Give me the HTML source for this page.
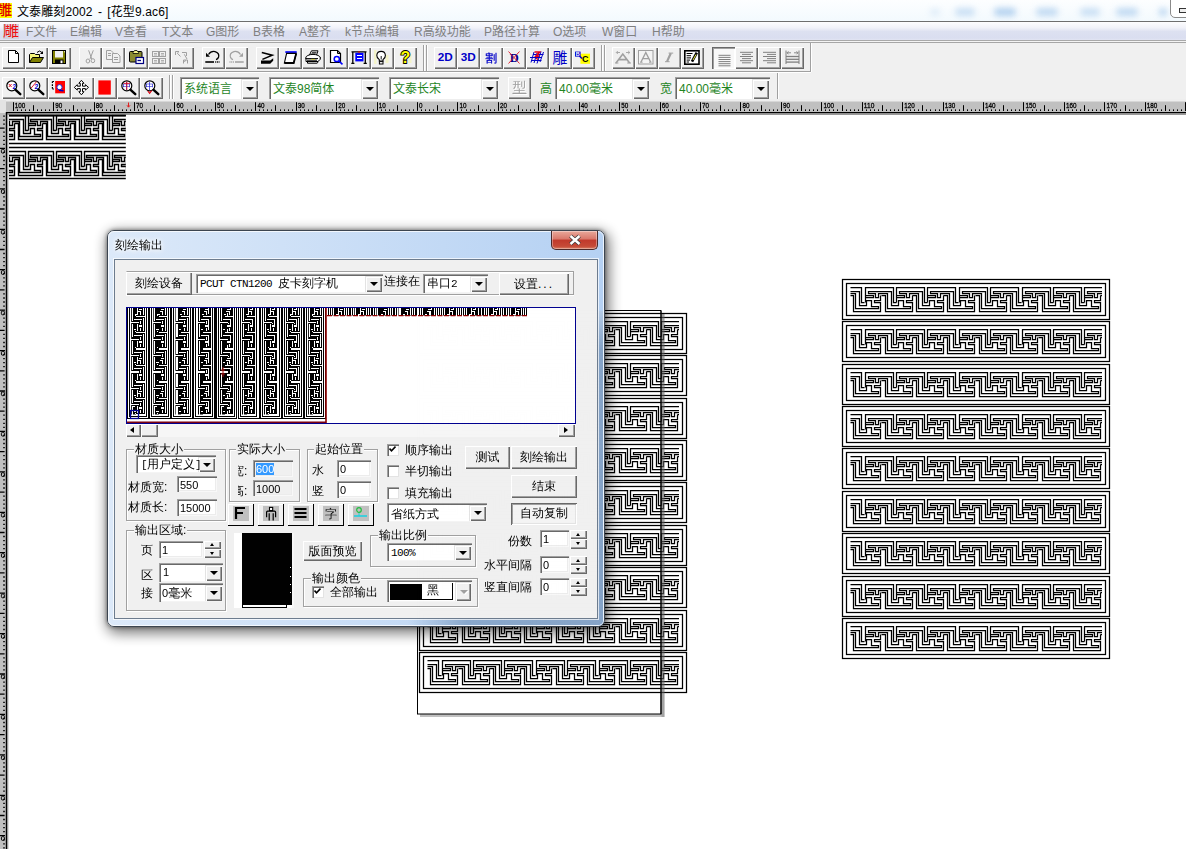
<!DOCTYPE html>
<html lang="zh"><head><meta charset="utf-8"><title>文泰雕刻2002 - [花型9.ac6]</title>
<style>
*{box-sizing:border-box}
html,body{margin:0;padding:0}
body{width:1186px;height:849px;overflow:hidden;position:relative;background:#fff;font-family:"Liberation Sans","WenQuanYi Zen Hei","Noto Sans CJK SC",sans-serif;font-size:12px;color:#000}
.a{position:absolute}
.ya{font-family:"Liberation Sans","Noto Sans CJK SC",sans-serif}
.tb{position:absolute;width:23px;height:22px;background:#f0f0f0;box-shadow:inset 1px 1px 0 #fff,inset -1px -1px 0 #696969,inset -2px -2px 0 #a0a0a0}
.tb.pr{background:#f8f8f8;box-shadow:inset 1px 1px 0 #696969,inset 2px 2px 0 #a0a0a0,inset -1px -1px 0 #fff}
.tb svg{position:absolute;left:3px;top:3px;width:16px;height:16px;overflow:visible}
.bt{position:absolute;background:#f0f0f0;box-shadow:inset 1px 1px 0 #fff,inset -1px -1px 0 #696969,inset -2px -2px 0 #a0a0a0;text-align:center;white-space:nowrap}
.ed{position:absolute;background:#fff;box-shadow:inset 1px 1px 0 #a0a0a0,inset 2px 2px 0 #696969,inset -1px -1px 0 #f8f8f8,inset -2px -2px 0 #ececec;white-space:nowrap;overflow:hidden}
.cbx{position:absolute;background:#fff;box-shadow:inset 1px 1px 0 #a0a0a0,inset 2px 2px 0 #696969,inset -1px -1px 0 #f4f4f4;white-space:nowrap;overflow:hidden}
.dd{position:absolute;right:1px;top:2px;bottom:1px;width:17px;background:#f0f0f0;box-shadow:inset 1px 1px 0 #e3e3e3,inset 2px 2px 0 #fff,inset -1px -1px 0 #696969,inset -2px -2px 0 #a0a0a0}
.dd:after{content:"";position:absolute;left:5px;top:50%;margin-top:-2px;border:4px solid transparent;border-top:4px solid #000;border-bottom:0}
.dd.dis:after{border-top-color:#a0a0a0;filter:drop-shadow(1px 1px 0 #fff)}
.gb{position:absolute;border:1px solid #a0a0a0;box-shadow:inset 1px 1px 0 #fff,1px 1px 0 #fff}
.gl{position:absolute;background:#f0f0f0;white-space:nowrap;line-height:12px;padding:0 1px}
.lb{position:absolute;white-space:nowrap;line-height:12px}
.cb{position:absolute;width:12px;height:12px;background:#fff;box-shadow:inset 1px 1px 0 #a0a0a0,inset 2px 2px 0 #696969,inset -1px -1px 0 #e3e3e3}
.sp{position:absolute;background:#f0f0f0;box-shadow:inset 1px 1px 0 #fff,inset -1px -1px 0 #696969,inset -2px -2px 0 #a0a0a0}
.sp:after{content:"";position:absolute;left:50%;margin-left:-3px;top:50%;margin-top:-2px;border:2.5px solid transparent}
.sp.u:after{border-bottom:3px solid #000;border-top:0}
.sp.d:after{border-top:3px solid #000;border-bottom:0}
.gn{color:#1f851f}
.mn{font-family:"Liberation Mono",monospace;font-size:11px;letter-spacing:-0.6px}
.num{font-family:"Liberation Sans",sans-serif;font-size:11px}
</style></head><body>

<div class="a" style="left:0;top:0;width:1186px;height:21px;background:linear-gradient(#fdfeff,#f3fafe)"></div>
<div class="a" style="left:930px;top:8px;width:10px;height:8px;background:#9cc3ea;opacity:0.25;filter:blur(3px);border-radius:4px"></div>
<div class="a" style="left:955px;top:8px;width:20px;height:8px;background:#9cc3ea;opacity:0.5;filter:blur(3px);border-radius:4px"></div>
<div class="a" style="left:994px;top:8px;width:22px;height:8px;background:#9cc3ea;opacity:0.75;filter:blur(3px);border-radius:4px"></div>
<div class="a" style="left:1036px;top:8px;width:22px;height:8px;background:#9cc3ea;opacity:0.6;filter:blur(3px);border-radius:4px"></div>
<div class="a" style="left:1080px;top:8px;width:20px;height:8px;background:#9cc3ea;opacity:0.5;filter:blur(3px);border-radius:4px"></div>
<div class="a" style="left:1116px;top:8px;width:22px;height:8px;background:#9cc3ea;opacity:0.6;filter:blur(3px);border-radius:4px"></div>
<div class="a" style="left:1159px;top:8px;width:8px;height:8px;background:#9cc3ea;opacity:0.7;filter:blur(3px);border-radius:4px"></div>
<div class="a" style="left:1170px;top:-6px;width:30px;height:24px;background:#fff;border:1px solid #8a8a8a;border-radius:5px"></div>
<div class="a" style="left:1179px;top:8px;width:12px;height:5px;border:1px solid #333;background:#eee"></div>
<div class="a" style="left:0;top:3px;width:12px;height:15px;background:#ffff00;overflow:hidden"><span class="a ya" style="left:-4px;top:-3px;font-size:16px;line-height:20px;color:#e00000;font-weight:500">雕</span></div>
<div class="a ya" style="left:17px;top:2px;font-size:12px;line-height:20px;white-space:nowrap;color:#000;word-spacing:1.8px;letter-spacing:.12px">文泰雕刻2002 - [花型9.ac6]</div>
<div class="a" style="left:0;top:21px;width:1186px;height:1px;background:#6e6e6e"></div>
<div class="a" style="left:0;top:22px;width:1186px;height:19px;background:linear-gradient(#fdfdfe 0%,#f1f2f9 30%,#dde1f1 50%,#dadef0 85%,#e6e9f5 100%)"></div>
<div class="a" style="left:0;top:40px;width:1186px;height:1px;background:#a9a9a9"></div>
<div class="a" style="left:0;top:41px;width:1186px;height:1px;background:#f4f4f4"></div>
<div class="a" style="left:0;top:42px;width:1186px;height:58px;background:#f0f0f0"></div>
<div class="a" style="left:0;top:42px;width:1186px;height:1px;background:#a6a6a6"></div>
<div class="a" style="left:3px;top:24px;width:16px;height:15px;background:#d2d2dc;overflow:hidden"><span class="a ya" style="left:0px;top:-3px;font-size:16px;line-height:20px;color:#f01010">雕</span></div>
<div class="a ya" style="left:26px;top:24px;line-height:17px;font-size:12px;color:#808080;white-space:nowrap">F文件</div>
<div class="a ya" style="left:70px;top:24px;line-height:17px;font-size:12px;color:#808080;white-space:nowrap">E编辑</div>
<div class="a ya" style="left:115px;top:24px;line-height:17px;font-size:12px;color:#808080;white-space:nowrap">V查看</div>
<div class="a ya" style="left:162px;top:24px;line-height:17px;font-size:12px;color:#808080;white-space:nowrap">T文本</div>
<div class="a ya" style="left:206px;top:24px;line-height:17px;font-size:12px;color:#808080;white-space:nowrap">G图形</div>
<div class="a ya" style="left:253px;top:24px;line-height:17px;font-size:12px;color:#808080;white-space:nowrap">B表格</div>
<div class="a ya" style="left:299px;top:24px;line-height:17px;font-size:12px;color:#808080;white-space:nowrap">A整齐</div>
<div class="a ya" style="left:345px;top:24px;line-height:17px;font-size:12px;color:#808080;white-space:nowrap">k节点编辑</div>
<div class="a ya" style="left:414px;top:24px;line-height:17px;font-size:12px;color:#808080;white-space:nowrap">R高级功能</div>
<div class="a ya" style="left:484px;top:24px;line-height:17px;font-size:12px;color:#808080;white-space:nowrap">P路径计算</div>
<div class="a ya" style="left:553px;top:24px;line-height:17px;font-size:12px;color:#808080;white-space:nowrap">O选项</div>
<div class="a ya" style="left:602px;top:24px;line-height:17px;font-size:12px;color:#808080;white-space:nowrap">W窗口</div>
<div class="a ya" style="left:652px;top:24px;line-height:17px;font-size:12px;color:#808080;white-space:nowrap">H帮助</div>
<div class="tb" style="left:2px;top:47px"><svg viewBox="0 0 16 16" style=""><path d="M3.5 0.5 H10.5 L13.5 3.5 V12.5 H3.5 Z" fill="#fff" stroke="#000"/><path d="M10.5 0.5 V3.5 H13.5" fill="none" stroke="#000"/></svg></div>
<div class="tb" style="left:25px;top:47px"><svg viewBox="0 0 16 16" style=""><path d="M1.5 12.5 V4.5 L2.5 3.5 H6.5 L7.5 4.5 H11.5 V7.5" fill="#f4f47a" stroke="#000"/><path d="M1.5 12.5 L4.5 7.5 H15.5 L12.5 12.5 Z" fill="#808000" stroke="#000"/><path d="M9 2.5 Q11.5 -0.5 14 2.5" fill="none" stroke="#000"/><path d="M15 1 V4 H12 Z" fill="#000"/></svg></div>
<div class="tb" style="left:48px;top:47px"><svg viewBox="0 0 16 16" style=""><rect x="1.5" y="0.5" width="13" height="13" fill="#808000" stroke="#000"/><rect x="4" y="1" width="8" height="6.5" fill="#f0f0f0"/><rect x="4" y="9.5" width="8.5" height="4" fill="#000"/><rect x="9.5" y="10.5" width="2" height="2.7" fill="#fff"/><rect x="13" y="1.3" width="1" height="1" fill="#fff"/></svg></div>
<div class="tb" style="left:79px;top:47px"><svg viewBox="0 0 16 16" style=""><path d="M6.6 0.3 L9.8 9 M11.3 0.3 L8 9" stroke="#a0a0a0" fill="none"/><ellipse cx="5.9" cy="11" rx="1.8" ry="2" fill="none" stroke="#a0a0a0"/><ellipse cx="10.9" cy="10.7" rx="1.8" ry="2" fill="none" stroke="#a0a0a0"/></svg></div>
<div class="tb" style="left:102px;top:47px"><svg viewBox="0 0 16 16" style=""><path d="M1.5 0.5 H6 L8 2.5 V9.5 H1.5 Z" fill="#f0f0f0" stroke="#a0a0a0"/><path d="M7.5 3.5 H12.5 L15 6 V12.5 H7.5 Z" fill="#f0f0f0" stroke="#a0a0a0"/><path d="M3 3.5 H6 M3 5.5 H6 M9 7.5 H13 M9 9.5 H13" stroke="#a0a0a0"/></svg></div>
<div class="tb" style="left:125px;top:47px"><svg viewBox="0 0 16 16" style=""><rect x="1.5" y="1.5" width="12.5" height="10.5" rx="1" fill="#8a8a30" stroke="#000"/><path d="M5 2.5 L6.5 0.5 H9 L10.5 2.5 V3.5 H5 Z" fill="#f4f48a" stroke="#000" stroke-width=".8"/><rect x="8" y="7.5" width="7.5" height="6" fill="#fff" stroke="#000080" stroke-width="1.2"/><path d="M9.5 10.5 H13" stroke="#000080" stroke-width="1.3"/></svg></div>
<div class="tb" style="left:148px;top:47px"><svg viewBox="0 0 16 16" style=""><g fill="none" stroke="#a0a0a0"><rect x="1.5" y="1.5" width="6" height="5"/><rect x="8.5" y="1.5" width="6" height="5"/><rect x="1.5" y="8.5" width="6" height="5"/><rect x="8.5" y="8.5" width="6" height="5"/><path d="M3 3.5 H6 M10 3.5 H13 M3 10.5 H6 M10 10.5 H13 M3 5 H6 M10 5 H13 M3 12 H6 M10 12 H13" stroke-width=".8"/></g></svg></div>
<div class="tb" style="left:171px;top:47px"><svg viewBox="0 0 16 16" style=""><g fill="none" stroke="#a0a0a0"><path d="M1.5 5 V1.5 H5 L3.3 3.2 L6.5 6.5 M8 2.5 H12.5 V6 M10.3 4.3 L13 9 M9.5 13.5 V10 H13.5 V13.5 M11.5 10 L10.5 12"/></g></svg></div>
<div class="tb" style="left:202px;top:47px"><svg viewBox="0 0 16 16" style=""><path d="M3.5 4.5 Q6 0.8 10 1.6 Q14.6 3 13.6 7 Q13 9 11 9.6" fill="none" stroke="#000" stroke-width="1.3"/><path d="M1 2.8 V6.8 H5 Z" fill="#000"/><path d="M0.3 12 H9" stroke="#000" stroke-width="1.6"/><path d="M10.2 12 H14.5" stroke="#000" stroke-width="1.6" stroke-dasharray="1 .7"/></svg></div>
<div class="tb" style="left:225px;top:47px"><svg viewBox="0 0 16 16" style=""><path d="M12.5 4.5 Q10 0.8 6 1.6 Q1.4 3 2.4 7 Q3 9 5 9.6" fill="none" stroke="#a0a0a0" stroke-width="1.2"/><path d="M15 2.8 V6.8 H11 Z" fill="#a0a0a0"/><path d="M7 12 H15.7" stroke="#a0a0a0" stroke-width="1.5"/><path d="M1.5 12 H6" stroke="#a0a0a0" stroke-width="1.5" stroke-dasharray="1 .7"/></svg></div>
<div class="tb" style="left:256px;top:47px"><svg viewBox="0 0 16 16" style=""><path d="M2.8 2.6 L13.3 5.2 L3.4 9.4" fill="none" stroke="#000" stroke-width="1.5"/><path d="M2 10.4 H11.2 L14.2 8.2 V10.8 L11.2 13.8 H2 Z" fill="#000"/></svg></div>
<div class="tb" style="left:279px;top:47px"><svg viewBox="0 0 16 16" style=""><rect x="3.3" y="1.2" width="11.4" height="1.7" fill="#0000ff"/><path d="M4.6 3.4 H14.2 L11.7 13 H2.4 Z" fill="#fff" stroke="#000" stroke-width="1.1"/><path d="M14.2 3.4 L11.7 13 H2.4" fill="none" stroke="#000" stroke-width="1.8"/></svg></div>
<div class="tb" style="left:302px;top:47px"><svg viewBox="0 0 16 16" style=""><path d="M4.5 5 L6.5 0.8 H13 L11.5 5" fill="#fff" stroke="#000"/><path d="M7 2.4 H11.5 M6.3 3.8 H10.8" stroke="#000" stroke-width=".8"/><ellipse cx="8" cy="8" rx="7.3" ry="3.6" fill="#fff" stroke="#000"/><path d="M1 8 V11.5 H13 L15.2 9.3 V7" fill="#fff" stroke="#000"/><path d="M1 8.6 H13 M2 10.2 H12" stroke="#000"/><path d="M6 9.4 H10" stroke="#c8c84a" stroke-width="1"/><path d="M2.5 11.5 V13.2 H12 L13.5 11.8" fill="none" stroke="#000"/></svg></div>
<div class="tb" style="left:325px;top:47px"><svg viewBox="0 0 16 16" style=""><path d="M2.5 0.5 H9.5 L12.5 3.5 V12.5 H2.5 Z" fill="#fff" stroke="#000" stroke-width="1.2"/><path d="M9.5 0.5 V3.5 H12.5" fill="none" stroke="#000"/><circle cx="8.8" cy="9" r="2.6" fill="#fff" stroke="#0000ff" stroke-width="1.5"/><path d="M10.8 11 L14.5 14.3" stroke="#0000ff" stroke-width="1.6"/></svg></div>
<div class="tb" style="left:348px;top:47px"><svg viewBox="0 0 16 16" style=""><path d="M0.5 1.8 H15.5 M1.8 1.5 V13.3 M14.3 1.5 V13.3 M0.3 13.3 H3.4 M12.6 13.3 H15.8" stroke="#000" stroke-width="1.3" fill="none"/><rect x="4.3" y="2.8" width="8.2" height="8.6" fill="#0000ff"/><path d="M6 5.5 H11 M6 8.5 H11" stroke="#fff" stroke-width="1"/><path d="M8 1 V3" stroke="#e00" stroke-width="1"/></svg></div>
<div class="tb" style="left:371px;top:47px"><svg viewBox="0 0 16 16" style=""><rect x="0" y="0" width="2.5" height="14" fill="#f3f3c8"/><rect x="11.5" y="5" width="3" height="8" fill="#f3f3c8"/><path d="M5.3 11 V9.6 Q2.6 7.6 2.8 5.2 Q3.2 1.4 7.2 1.4 Q11 1.4 11.4 5.2 Q11.6 7.6 9 9.6 V11 Z" fill="#fff" stroke="#000" stroke-width="1.1"/><rect x="5.4" y="11.6" width="3.6" height="2.4" fill="#fff" stroke="#000"/><path d="M7.2 6 V9.5" stroke="#000" stroke-width=".9"/></svg></div>
<div class="tb" style="left:394px;top:47px"><svg viewBox="0 0 16 16" style=""><rect x="11" y="4" width="3.5" height="9" fill="#f3f3c8"/><text x="8.3" y="13" font-family="Liberation Sans,sans-serif" font-weight="bold" font-size="16" text-anchor="middle" fill="#ffff00" stroke="#000" stroke-width="1.8" paint-order="stroke">?</text></svg></div>
<div class="tb" style="left:434px;top:47px"><svg viewBox="0 0 16 16" style=""><text x="8.3" y="11.4" font-family="Liberation Sans,sans-serif" font-weight="bold" font-size="11.8" text-anchor="middle" fill="#0000c8" textLength="15" lengthAdjust="spacingAndGlyphs">2D</text></svg></div>
<div class="tb" style="left:457px;top:47px"><svg viewBox="0 0 16 16" style=""><text x="8.3" y="11.4" font-family="Liberation Sans,sans-serif" font-weight="bold" font-size="11.8" text-anchor="middle" fill="#0000c8" textLength="15" lengthAdjust="spacingAndGlyphs">3D</text></svg></div>
<div class="tb" style="left:480px;top:47px"><svg viewBox="0 0 16 16" style=""><text x="8.3" y="11.6" font-family="WenQuanYi Zen Hei,Noto Sans CJK SC,sans-serif" font-size="11.5" text-anchor="middle" fill="#0000c8" stroke="#0000c8" stroke-width=".35">割</text></svg></div>
<div class="tb" style="left:503px;top:47px"><svg viewBox="0 0 16 16" style=""><text x="8.3" y="11.6" font-family="Liberation Serif,serif" font-weight="bold" font-size="12.5" text-anchor="middle" fill="#000090">D</text><path d="M2.5 1.5 L13.5 13.5 M13.5 1.5 L2.5 13.5" stroke="#e01020" stroke-width=".9"/></svg></div>
<div class="tb" style="left:526px;top:47px"><svg viewBox="0 0 16 16" style=""><g stroke="#0000c8" stroke-width="1" fill="none"><path d="M5 2 L2 12.5 M8 3 L5 13 M12 1.5 L8 13.5 M14.5 2 L11 12 M1 7.5 H13 M2 10.5 H12.5 M4 4.5 H14.5"/></g><path d="M5.5 2 H10.5 L7 6.2 H10" stroke="#e0001a" stroke-width="1.7" fill="none"/><path d="M7 8 L9 9.5" stroke="#e0001a" stroke-width="1.5"/></svg></div>
<div class="tb" style="left:549px;top:47px"><svg viewBox="0 0 16 16" style=""><text x="7.8" y="13.2" font-family="Noto Sans CJK SC,WenQuanYi Zen Hei,sans-serif" font-size="14.8" text-anchor="middle" fill="#0000c8">雕</text></svg></div>
<div class="tb" style="left:572px;top:47px"><svg viewBox="0 0 16 16" style=""><rect x="5.4" y="3.7" width="9.6" height="10.1" fill="#ffff00"/><rect x="0" y="1.6" width="5.6" height="5" fill="#0000d0"/><text x="2.8" y="6" font-family="Liberation Sans,sans-serif" font-weight="bold" font-size="5.5" text-anchor="middle" fill="#fff">B</text><path d="M4.5 6 L7 8.5" stroke="#0000d0" stroke-width="1.6"/><text x="10.2" y="12.4" font-family="Liberation Sans,sans-serif" font-weight="bold" font-size="9" text-anchor="middle" fill="#000">C</text></svg></div>
<div class="tb" style="left:612px;top:47px"><svg viewBox="0 0 16 16" style=""><path d="M1 13 L7.8 4 L14.6 13 M4 9.6 H11.6" stroke="#a0a0a0" stroke-width="1.6" fill="none"/><path d="M0 13 H3.4 M12.2 13 H16" stroke="#a0a0a0" stroke-width="1.2"/><path d="M1.5 2.5 H5 M2.8 1 L1.3 2.5 L2.8 4 M11 2.5 H14.6 M13.2 1 L14.8 2.5 L13.2 4" stroke="#a0a0a0" stroke-width=".9" fill="none"/></svg></div>
<div class="tb" style="left:635px;top:47px"><svg viewBox="0 0 16 16" style=""><rect x="0.5" y="0.5" width="14.5" height="13.5" fill="#f4f4f4" stroke="#a0a0a0"/><path d="M3 12 L7.8 2.5 L12.6 12 M5 8.6 H10.6" stroke="#a0a0a0" stroke-width="1.4" fill="none"/><path d="M2 12.2 H4.6 M11 12.2 H13.6" stroke="#a0a0a0"/></svg></div>
<div class="tb" style="left:658px;top:47px"><svg viewBox="0 0 16 16" style=""><path d="M6 11.6 L9.8 3.2" stroke="#a0a0a0" stroke-width="2.2"/><path d="M4 11.7 H8.6 M7.6 3.1 H12.2" stroke="#a0a0a0" stroke-width="1"/></svg></div>
<div class="tb" style="left:681px;top:47px"><svg viewBox="0 0 16 16" style=""><rect x="0.8" y="0.8" width="14.2" height="13.4" fill="#fff" stroke="#000" stroke-width="1.6"/><path d="M2.6 3.5 H8.5 M2.6 5.7 H7 M2.6 7.9 H7 M2.6 10.1 H6 M2.6 12 H5" stroke="#000" stroke-width="1"/><path d="M12.8 2.6 L8 11.6" stroke="#000" stroke-width="2.6"/><path d="M12 4.5 L9 10" stroke="#e8e84a" stroke-width="1"/></svg></div>
<div class="tb pr" style="left:712px;top:47px"><svg viewBox="0 0 16 16" style="left:4px;top:4px"><path d="M2.5 4.3 H14.5" stroke="#808080" stroke-width="1"/><path d="M2.5 6.4 H14.5" stroke="#808080" stroke-width="1"/><path d="M2.5 8.5 H14.5" stroke="#808080" stroke-width="1"/><path d="M2.5 10.6 H14.5" stroke="#808080" stroke-width="1"/><path d="M2.5 12.7 H14.5" stroke="#808080" stroke-width="1"/><path d="M2.5 14.8 H14.5" stroke="#808080" stroke-width="1"/></svg></div>
<div class="tb" style="left:735px;top:47px"><svg viewBox="0 0 16 16" style=""><path d="M2 2.3 H15" stroke="#808080" stroke-width="1"/><path d="M4 4.4 H13" stroke="#808080" stroke-width="1"/><path d="M2 6.5 H15" stroke="#808080" stroke-width="1"/><path d="M4 8.6 H13" stroke="#808080" stroke-width="1"/><path d="M2 10.7 H15" stroke="#808080" stroke-width="1"/><path d="M4 12.8 H13" stroke="#808080" stroke-width="1"/></svg></div>
<div class="tb" style="left:758px;top:47px"><svg viewBox="0 0 16 16" style=""><path d="M2 2.3 H15" stroke="#808080" stroke-width="1"/><path d="M6 4.4 H15" stroke="#808080" stroke-width="1"/><path d="M2 6.5 H15" stroke="#808080" stroke-width="1"/><path d="M6 8.6 H15" stroke="#808080" stroke-width="1"/><path d="M2 10.7 H15" stroke="#808080" stroke-width="1"/><path d="M6 12.8 H15" stroke="#808080" stroke-width="1"/></svg></div>
<div class="tb" style="left:781px;top:47px"><svg viewBox="0 0 16 16" style=""><path d="M2 0.5 V14 M15 0.5 V14" stroke="#808080"/><path d="M3 2.8 H7 M4.5 1.3 L3 2.8 L4.5 4.3 M10 2.8 H14 M12.5 1.3 L14 2.8 L12.5 4.3" stroke="#808080" stroke-width=".9" fill="none"/><path d="M2 6.5 H15" stroke="#808080" stroke-width="1.3"/><path d="M2 9.3 H15" stroke="#808080" stroke-width="1.3"/><path d="M2 12.1 H15" stroke="#808080" stroke-width="1.3"/></svg></div>
<div class="tb" style="left:2px;top:77px"><svg viewBox="0 0 16 16" style=""><circle cx="6.8" cy="5.8" r="5" fill="#fff" stroke="#000" stroke-width="1.2"/><path d="M3.8 4 L6.6 7 M6.6 4 L3.8 7" stroke="#e00010" stroke-width=".9"/><text x="9.2" y="8.6" font-family="Liberation Sans,sans-serif" font-weight="bold" font-size="6.5" text-anchor="middle" fill="#0000d0">2</text><path d="M10.6 9.8 L15.3 14.2" stroke="#000" stroke-width="2.4" stroke-linecap="round"/></svg></div>
<div class="tb" style="left:25px;top:77px"><svg viewBox="0 0 16 16" style=""><circle cx="6.8" cy="5.8" r="5" fill="#fff" stroke="#000" stroke-width="1.2"/><path d="M3.2 8 L8.6 1.6" stroke="#e00010" stroke-width=".9"/><text x="8.4" y="9" font-family="Liberation Sans,sans-serif" font-weight="bold" font-size="7" text-anchor="middle" fill="#0000d0">2</text><path d="M10.6 9.8 L15.3 14.2" stroke="#000" stroke-width="2.4" stroke-linecap="round"/></svg></div>
<div class="tb" style="left:48px;top:77px"><svg viewBox="0 0 16 16" style=""><rect x="4.2" y="1" width="9.8" height="12.3" fill="#ff0000"/><path d="M1.4 1.5 V9.5" stroke="#000" stroke-width="1.2" stroke-dasharray="1.6 1.2"/><path d="M1.4 1.5 H3 M1.4 9 H3" stroke="#000"/><circle cx="8.5" cy="7.2" r="2.6" fill="#fff" stroke="#2020d0" stroke-width="1"/><path d="M8 10.2 L12.5 10.8" stroke="#0000c0" stroke-width="1.6"/></svg></div>
<div class="tb" style="left:71px;top:77px"><svg viewBox="0 0 16 16" style=""><path d="M7.4 0.3 L10 3.3 H8.5 V6.2 H11.4 V4.7 L14.5 7.4 L11.4 10.1 V8.6 H8.5 V11.7 H10 L7.4 14.8 L4.8 11.7 H6.3 V8.6 H3.3 V10.1 L0.3 7.4 L3.3 4.7 V6.2 H6.3 V3.3 H4.8 Z" fill="#fff" stroke="#000" stroke-width="1"/></svg></div>
<div class="tb" style="left:94px;top:77px"><svg viewBox="0 0 16 16" style=""><rect x="1.4" y="0.4" width="12.4" height="14.2" fill="#ff0000"/></svg></div>
<div class="tb" style="left:117px;top:77px"><svg viewBox="0 0 16 16" style=""><circle cx="6.8" cy="5.8" r="5" fill="#fff" stroke="#000" stroke-width="1.2"/><text x="6.8" y="9" font-family="WenQuanYi Zen Hei,Noto Sans CJK SC,sans-serif" font-size="8.5" text-anchor="middle" fill="#0000d0">中</text><path d="M6.8 1.5 V10" stroke="#e00010" stroke-width=".9"/><path d="M3.5 3.4 H10" stroke="#e00010" stroke-width=".8"/><path d="M10.6 9.8 L15.3 14.2" stroke="#000" stroke-width="2.4" stroke-linecap="round"/></svg></div>
<div class="tb" style="left:140px;top:77px"><svg viewBox="0 0 16 16" style=""><circle cx="6.8" cy="5.8" r="5" fill="#fff" stroke="#000" stroke-width="1.2"/><text x="6.8" y="9" font-family="WenQuanYi Zen Hei,Noto Sans CJK SC,sans-serif" font-size="8.5" text-anchor="middle" fill="#0000d0">中</text><path d="M10.6 9.8 L15.3 14.2" stroke="#000" stroke-width="2.4" stroke-linecap="round"/><path d="M4.8 11 L6.6 13.4 L8.6 10.6" stroke="#e00010" stroke-width="1.1" fill="none"/></svg></div>
<div class="a" style="left:423px;top:45px;width:2px;height:26px;background:linear-gradient(90deg,#a0a0a0 50%,#fff 50%)"></div>
<div class="a" style="left:426px;top:45px;width:2px;height:26px;background:linear-gradient(90deg,#a0a0a0 50%,#fff 50%)"></div>
<div class="a" style="left:601px;top:45px;width:2px;height:26px;background:linear-gradient(90deg,#a0a0a0 50%,#fff 50%)"></div>
<div class="a" style="left:604px;top:45px;width:2px;height:26px;background:linear-gradient(90deg,#a0a0a0 50%,#fff 50%)"></div>
<div class="a" style="left:169px;top:75px;width:2px;height:25px;background:linear-gradient(90deg,#a0a0a0 50%,#fff 50%)"></div>
<div class="a" style="left:172px;top:75px;width:2px;height:25px;background:linear-gradient(90deg,#a0a0a0 50%,#fff 50%)"></div>
<div class="a" style="left:810px;top:43px;width:2px;height:29px;background:linear-gradient(90deg,#a0a0a0 50%,#fff 50%)"></div>
<div class="a" style="left:777px;top:73px;width:2px;height:27px;background:linear-gradient(90deg,#a0a0a0 50%,#fff 50%)"></div>
<div class="a" style="left:0;top:71px;width:811px;height:1px;background:#a0a0a0"></div><div class="a" style="left:0;top:72px;width:811px;height:1px;background:#fff"></div>
<div class="cbx" style="left:180px;top:77px;width:79px;height:23px"><div class="dd"></div><span class="a gn" style="left:4px;top:1px;line-height:22px;font-size:12px;font-family:'Liberation Sans','Noto Sans CJK SC',sans-serif">系统语言</span></div>
<div class="cbx" style="left:269px;top:77px;width:110px;height:23px"><div class="dd"></div><span class="a gn" style="left:4px;top:1px;line-height:22px;font-size:12px;font-family:'Liberation Sans','Noto Sans CJK SC',sans-serif">文泰98简体</span></div>
<div class="cbx" style="left:389px;top:77px;width:110px;height:23px"><div class="dd"></div><span class="a gn" style="left:4px;top:1px;line-height:22px;font-size:12px;font-family:'Liberation Sans','Noto Sans CJK SC',sans-serif">文泰长宋</span></div>
<div class="bt" style="left:508px;top:77px;width:23px;height:22px;color:#a0a0a0;font-size:14px;line-height:20px;text-decoration:underline;text-shadow:1px 1px 0 #fff" class="ya">型</div>
<div class="lb gn" style="left:540px;top:83px;font-size:12px;font-family:'Liberation Sans','Noto Sans CJK SC',sans-serif">高</div>
<div class="cbx" style="left:555px;top:77px;width:95px;height:23px"><div class="dd"></div><span class="a gn" style="left:4px;top:1px;line-height:22px;font-size:12px;font-family:'Liberation Sans','Noto Sans CJK SC',sans-serif">40.00毫米</span></div>
<div class="lb gn" style="left:660px;top:83px;font-size:12px;font-family:'Liberation Sans','Noto Sans CJK SC',sans-serif">宽</div>
<div class="cbx" style="left:675px;top:77px;width:95px;height:23px"><div class="dd"></div><span class="a gn" style="left:4px;top:1px;line-height:22px;font-size:12px;font-family:'Liberation Sans','Noto Sans CJK SC',sans-serif">40.00毫米</span></div>
<svg class="a" style="left:0;top:0" width="1186" height="849" viewBox="0 0 1186 849"><defs>
<clipPath id="mc"><rect x="8" y="7" width="251.5" height="27"/></clipPath>
<path id="mea" clip-path="url(#mc)" d="M-9 23 L-9 8 L19 8 L19 23 L22 23 M-9 16 L-1 16 L-1 18 L-9 18 M-6 12 L17 12 L17 26 L24 26 L24 21 L29 21 L29 27 L36 27 L36 29 L13 29 L13 14 L4 14 L4 18 L1 18 L1 14 L-6 14 Z M7 16 L11 16 L11 32 L38 32 L38 23 L32 23 L32 21 L38 21 L38 16 M23 23 L23 8 L51 8 L51 23 L54 23 M23 16 L31 16 L31 18 L23 18 M26 12 L49 12 L49 26 L56 26 L56 21 L61 21 L61 27 L68 27 L68 29 L45 29 L45 14 L36 14 L36 18 L33 18 L33 14 L26 14 Z M39 16 L43 16 L43 32 L70 32 L70 23 L64 23 L64 21 L70 21 L70 16 M54 23 L54 8 L82 8 L82 23 L85 23 M54 16 L62 16 L62 18 L54 18 M57 12 L80 12 L80 26 L87 26 L87 21 L92 21 L92 27 L99 27 L99 29 L76 29 L76 14 L67 14 L67 18 L64 18 L64 14 L57 14 Z M70 16 L74 16 L74 32 L101 32 L101 23 L95 23 L95 21 L101 21 L101 16 M85 23 L85 8 L113 8 L113 23 L116 23 M85 16 L93 16 L93 18 L85 18 M88 12 L111 12 L111 26 L118 26 L118 21 L123 21 L123 27 L130 27 L130 29 L107 29 L107 14 L98 14 L98 18 L95 18 L95 14 L88 14 Z M101 16 L105 16 L105 32 L132 32 L132 23 L126 23 L126 21 L132 21 L132 16 M117 23 L117 8 L145 8 L145 23 L148 23 M117 16 L125 16 L125 18 L117 18 M120 12 L143 12 L143 26 L150 26 L150 21 L155 21 L155 27 L162 27 L162 29 L139 29 L139 14 L130 14 L130 18 L127 18 L127 14 L120 14 Z M133 16 L137 16 L137 32 L164 32 L164 23 L158 23 L158 21 L164 21 L164 16 M148 23 L148 8 L176 8 L176 23 L179 23 M148 16 L156 16 L156 18 L148 18 M151 12 L174 12 L174 26 L181 26 L181 21 L186 21 L186 27 L193 27 L193 29 L170 29 L170 14 L161 14 L161 18 L158 18 L158 14 L151 14 Z M164 16 L168 16 L168 32 L195 32 L195 23 L189 23 L189 21 L195 21 L195 16 M180 23 L180 8 L208 8 L208 23 L211 23 M180 16 L188 16 L188 18 L180 18 M183 12 L206 12 L206 26 L213 26 L213 21 L218 21 L218 27 L225 27 L225 29 L202 29 L202 14 L193 14 L193 18 L190 18 L190 14 L183 14 Z M196 16 L200 16 L200 32 L227 32 L227 23 L221 23 L221 21 L227 21 L227 16 M211 23 L211 8 L239 8 L239 23 L242 23 M211 16 L219 16 L219 18 L211 18 M214 12 L237 12 L237 26 L244 26 L244 21 L249 21 L249 27 L256 27 L256 29 L233 29 L233 14 L224 14 L224 18 L221 18 L221 14 L214 14 Z M227 16 L231 16 L231 32 L258 32 L258 23 L252 23 L252 21 L258 21 L258 16 M242 23 L242 8 L270 8 L270 23 L273 23 M242 16 L250 16 L250 18 L242 18 M245 12 L268 12 L268 26 L275 26 L275 21 L280 21 L280 27 L287 27 L287 29 L264 29 L264 14 L255 14 L255 18 L252 18 L252 14 L245 14 Z M258 16 L262 16 L262 32 L289 32 L289 23 L283 23 L283 21 L289 21 L289 16"/>
<g id="strip"><rect x="0" y="0" width="267" height="40"/><rect x="4" y="4" width="259" height="32"/><use href="#mea"/></g>
</defs><rect x="0" y="99" width="1186" height="3" fill="#eeeeee"/><rect x="6" y="101.5" width="1180" height="10.5" fill="#c0c0c0"/><rect x="0" y="100" width="6" height="13" fill="#e4e4e4"/><rect x="0" y="113" width="6" height="736" fill="#c0c0c0"/><rect x="6" y="112" width="1180" height="1.3" fill="#000"/><rect x="6" y="113.3" width="1180" height="1.5" fill="#808080"/><rect x="5.8" y="112" width="1.5" height="737" fill="#000"/><rect x="7.3" y="114" width="1" height="735" fill="#909090"/><path d="M13.5 102.2V111M17.5 109.4V111M21.5 109.4V111M25.5 109.4V111M29.5 109.4V111M33.5 105.2V111M37.5 109.4V111M41.5 109.4V111M45.5 109.4V111M49.5 109.4V111M53.5 102.2V111M57.5 109.4V111M61.5 109.4V111M65.5 109.4V111M69.5 109.4V111M73.5 105.2V111M77.5 109.4V111M81.5 109.4V111M85.5 109.4V111M90.5 109.4V111M94.5 102.2V111M98.5 109.4V111M102.5 109.4V111M106.5 109.4V111M110.5 109.4V111M114.5 105.2V111M118.5 109.4V111M122.5 109.4V111M126.5 109.4V111M130.5 109.4V111M134.5 102.2V111M138.5 109.4V111M142.5 109.4V111M146.5 109.4V111M150.5 109.4V111M154.5 105.2V111M158.5 109.4V111M162.5 109.4V111M166.5 109.4V111M170.5 109.4V111M174.5 102.2V111M178.5 109.4V111M183.5 109.4V111M187.5 109.4V111M191.5 109.4V111M195.5 105.2V111M199.5 109.4V111M203.5 109.4V111M207.5 109.4V111M211.5 109.4V111M215.5 102.2V111M219.5 109.4V111M223.5 109.4V111M227.5 109.4V111M231.5 109.4V111M235.5 105.2V111M239.5 109.4V111M243.5 109.4V111M247.5 109.4V111M251.5 109.4V111M255.5 102.2V111M259.5 109.4V111M263.5 109.4V111M267.5 109.4V111M271.5 109.4V111M275.5 105.2V111M280.5 109.4V111M284.5 109.4V111M288.5 109.4V111M292.5 109.4V111M296.5 102.2V111M300.5 109.4V111M304.5 109.4V111M308.5 109.4V111M312.5 109.4V111M316.5 105.2V111M320.5 109.4V111M324.5 109.4V111M328.5 109.4V111M332.5 109.4V111M336.5 102.2V111M340.5 109.4V111M344.5 109.4V111M348.5 109.4V111M352.5 109.4V111M356.5 105.2V111M360.5 109.4V111M364.5 109.4V111M368.5 109.4V111M373.5 109.4V111M377.5 102.2V111M381.5 109.4V111M385.5 109.4V111M389.5 109.4V111M393.5 109.4V111M397.5 105.2V111M401.5 109.4V111M405.5 109.4V111M409.5 109.4V111M413.5 109.4V111M417.5 102.2V111M421.5 109.4V111M425.5 109.4V111M429.5 109.4V111M433.5 109.4V111M437.5 105.2V111M441.5 109.4V111M445.5 109.4V111M449.5 109.4V111M453.5 109.4V111M457.5 102.2V111M461.5 109.4V111M466.5 109.4V111M470.5 109.4V111M474.5 109.4V111M478.5 105.2V111M482.5 109.4V111M486.5 109.4V111M490.5 109.4V111M494.5 109.4V111M498.5 102.2V111M502.5 109.4V111M506.5 109.4V111M510.5 109.4V111M514.5 109.4V111M518.5 105.2V111M522.5 109.4V111M526.5 109.4V111M530.5 109.4V111M534.5 109.4V111M538.5 102.2V111M542.5 109.4V111M546.5 109.4V111M550.5 109.4V111M554.5 109.4V111M559.5 105.2V111M563.5 109.4V111M567.5 109.4V111M571.5 109.4V111M575.5 109.4V111M579.5 102.2V111M583.5 109.4V111M587.5 109.4V111M591.5 109.4V111M595.5 109.4V111M599.5 105.2V111M603.5 109.4V111M607.5 109.4V111M611.5 109.4V111M615.5 109.4V111M619.5 102.2V111M623.5 109.4V111M627.5 109.4V111M631.5 109.4V111M635.5 109.4V111M639.5 105.2V111M643.5 109.4V111M647.5 109.4V111M651.5 109.4V111M656.5 109.4V111M660.5 102.2V111M664.5 109.4V111M668.5 109.4V111M672.5 109.4V111M676.5 109.4V111M680.5 105.2V111M684.5 109.4V111M688.5 109.4V111M692.5 109.4V111M696.5 109.4V111M700.5 102.2V111M704.5 109.4V111M708.5 109.4V111M712.5 109.4V111M716.5 109.4V111M720.5 105.2V111M724.5 109.4V111M728.5 109.4V111M732.5 109.4V111M736.5 109.4V111M740.5 102.2V111M744.5 109.4V111M749.5 109.4V111M753.5 109.4V111M757.5 109.4V111M761.5 105.2V111M765.5 109.4V111M769.5 109.4V111M773.5 109.4V111M777.5 109.4V111M781.5 102.2V111M785.5 109.4V111M789.5 109.4V111M793.5 109.4V111M797.5 109.4V111M801.5 105.2V111M805.5 109.4V111M809.5 109.4V111M813.5 109.4V111M817.5 109.4V111M821.5 102.2V111M825.5 109.4V111M829.5 109.4V111M833.5 109.4V111M837.5 109.4V111M842.5 105.2V111M846.5 109.4V111M850.5 109.4V111M854.5 109.4V111M858.5 109.4V111M862.5 102.2V111M866.5 109.4V111M870.5 109.4V111M874.5 109.4V111M878.5 109.4V111M882.5 105.2V111M886.5 109.4V111M890.5 109.4V111M894.5 109.4V111M898.5 109.4V111M902.5 102.2V111M906.5 109.4V111M910.5 109.4V111M914.5 109.4V111M918.5 109.4V111M922.5 105.2V111M926.5 109.4V111M930.5 109.4V111M935.5 109.4V111M939.5 109.4V111M943.5 102.2V111M947.5 109.4V111M951.5 109.4V111M955.5 109.4V111M959.5 109.4V111M963.5 105.2V111M967.5 109.4V111M971.5 109.4V111M975.5 109.4V111M979.5 109.4V111M983.5 102.2V111M987.5 109.4V111M991.5 109.4V111M995.5 109.4V111M999.5 109.4V111M1003.5 105.2V111M1007.5 109.4V111M1011.5 109.4V111M1015.5 109.4V111M1019.5 109.4V111M1023.5 102.2V111M1027.5 109.4V111M1032.5 109.4V111M1036.5 109.4V111M1040.5 109.4V111M1044.5 105.2V111M1048.5 109.4V111M1052.5 109.4V111M1056.5 109.4V111M1060.5 109.4V111M1064.5 102.2V111M1068.5 109.4V111M1072.5 109.4V111M1076.5 109.4V111M1080.5 109.4V111M1084.5 105.2V111M1088.5 109.4V111M1092.5 109.4V111M1096.5 109.4V111M1100.5 109.4V111M1104.5 102.2V111M1108.5 109.4V111M1112.5 109.4V111M1116.5 109.4V111M1120.5 109.4V111M1125.5 105.2V111M1129.5 109.4V111M1133.5 109.4V111M1137.5 109.4V111M1141.5 109.4V111M1145.5 102.2V111M1149.5 109.4V111M1153.5 109.4V111M1157.5 109.4V111M1161.5 109.4V111M1165.5 105.2V111M1169.5 109.4V111M1173.5 109.4V111M1177.5 109.4V111M1181.5 109.4V111M1185.5 102.2V111" stroke="#000" stroke-width="1" fill="none"/><g font-family="Liberation Sans,sans-serif" font-size="8" fill="#000" stroke="#000" stroke-width=".3" opacity=".999"><text x="14.8" y="108.2" textLength="10.5" lengthAdjust="spacingAndGlyphs">100</text><text x="55.2" y="108.2" textLength="7.0" lengthAdjust="spacingAndGlyphs">90</text><text x="95.7" y="108.2" textLength="7.0" lengthAdjust="spacingAndGlyphs">80</text><text x="136.1" y="108.2" textLength="7.0" lengthAdjust="spacingAndGlyphs">70</text><text x="176.5" y="108.2" textLength="7.0" lengthAdjust="spacingAndGlyphs">60</text><text x="216.9" y="108.2" textLength="7.0" lengthAdjust="spacingAndGlyphs">50</text><text x="257.4" y="108.2" textLength="7.0" lengthAdjust="spacingAndGlyphs">40</text><text x="297.8" y="108.2" textLength="7.0" lengthAdjust="spacingAndGlyphs">30</text><text x="338.2" y="108.2" textLength="7.0" lengthAdjust="spacingAndGlyphs">20</text><text x="378.7" y="108.2" textLength="7.0" lengthAdjust="spacingAndGlyphs">10</text><text x="419.1" y="108.2" textLength="3.5" lengthAdjust="spacingAndGlyphs">0</text><text x="459.5" y="108.2" textLength="7.0" lengthAdjust="spacingAndGlyphs">10</text><text x="500.0" y="108.2" textLength="7.0" lengthAdjust="spacingAndGlyphs">20</text><text x="540.4" y="108.2" textLength="7.0" lengthAdjust="spacingAndGlyphs">30</text><text x="580.8" y="108.2" textLength="7.0" lengthAdjust="spacingAndGlyphs">40</text><text x="621.2" y="108.2" textLength="7.0" lengthAdjust="spacingAndGlyphs">50</text><text x="661.7" y="108.2" textLength="7.0" lengthAdjust="spacingAndGlyphs">60</text><text x="702.1" y="108.2" textLength="7.0" lengthAdjust="spacingAndGlyphs">70</text><text x="742.5" y="108.2" textLength="7.0" lengthAdjust="spacingAndGlyphs">80</text><text x="783.0" y="108.2" textLength="7.0" lengthAdjust="spacingAndGlyphs">90</text><text x="823.4" y="108.2" textLength="10.5" lengthAdjust="spacingAndGlyphs">100</text><text x="863.8" y="108.2" textLength="10.5" lengthAdjust="spacingAndGlyphs">110</text><text x="904.3" y="108.2" textLength="10.5" lengthAdjust="spacingAndGlyphs">120</text><text x="944.7" y="108.2" textLength="10.5" lengthAdjust="spacingAndGlyphs">130</text><text x="985.1" y="108.2" textLength="10.5" lengthAdjust="spacingAndGlyphs">140</text><text x="1025.5" y="108.2" textLength="10.5" lengthAdjust="spacingAndGlyphs">150</text><text x="1066.0" y="108.2" textLength="10.5" lengthAdjust="spacingAndGlyphs">160</text><text x="1106.4" y="108.2" textLength="10.5" lengthAdjust="spacingAndGlyphs">170</text><text x="1146.8" y="108.2" textLength="10.5" lengthAdjust="spacingAndGlyphs">180</text></g><path d="M128.5 102.5 V107 M127 105.3 L128.5 107.2 L130 105.3" stroke="#e02020" stroke-width="1" fill="none"/><path d="M3.2 116.1H4.8M3.2 120.1H4.8M3.2 124.1H4.8M0 128.2H4.6M3.2 132.2H4.8M3.2 136.3H4.8M3.2 140.3H4.8M3.2 144.4H4.8M0 148.4H5M3.2 152.4H4.8M3.2 156.5H4.8M3.2 160.5H4.8M3.2 164.6H4.8M0 168.6H4.6M3.2 172.7H4.8M3.2 176.7H4.8M3.2 180.7H4.8M3.2 184.8H4.8M0 188.8H5M3.2 192.9H4.8M3.2 196.9H4.8M3.2 201.0H4.8M3.2 205.0H4.8M0 209.0H4.6M3.2 213.1H4.8M3.2 217.1H4.8M3.2 221.2H4.8M3.2 225.2H4.8M0 229.3H5M3.2 233.3H4.8M3.2 237.3H4.8M3.2 241.4H4.8M3.2 245.4H4.8M0 249.5H4.6M3.2 253.5H4.8M3.2 257.6H4.8M3.2 261.6H4.8M3.2 265.6H4.8M0 269.7H5M3.2 273.7H4.8M3.2 277.8H4.8M3.2 281.8H4.8M3.2 285.9H4.8M0 289.9H4.6M3.2 293.9H4.8M3.2 298.0H4.8M3.2 302.0H4.8M3.2 306.1H4.8M0 310.1H5M3.2 314.2H4.8M3.2 318.2H4.8M3.2 322.2H4.8M3.2 326.3H4.8M0 330.3H4.6M3.2 334.4H4.8M3.2 338.4H4.8M3.2 342.5H4.8M3.2 346.5H4.8M0 350.6H5M3.2 354.6H4.8M3.2 358.6H4.8M3.2 362.7H4.8M3.2 366.7H4.8M0 370.8H4.6M3.2 374.8H4.8M3.2 378.9H4.8M3.2 382.9H4.8M3.2 386.9H4.8M0 391.0H5M3.2 395.0H4.8M3.2 399.1H4.8M3.2 403.1H4.8M3.2 407.2H4.8M0 411.2H4.6M3.2 415.2H4.8M3.2 419.3H4.8M3.2 423.3H4.8M3.2 427.4H4.8M0 431.4H5M3.2 435.5H4.8M3.2 439.5H4.8M3.2 443.5H4.8M3.2 447.6H4.8M0 451.6H4.6M3.2 455.7H4.8M3.2 459.7H4.8M3.2 463.8H4.8M3.2 467.8H4.8M0 471.8H5M3.2 475.9H4.8M3.2 479.9H4.8M3.2 484.0H4.8M3.2 488.0H4.8M0 492.1H4.6M3.2 496.1H4.8M3.2 500.1H4.8M3.2 504.2H4.8M3.2 508.2H4.8M0 512.3H5M3.2 516.3H4.8M3.2 520.4H4.8M3.2 524.4H4.8M3.2 528.4H4.8M0 532.5H4.6M3.2 536.5H4.8M3.2 540.6H4.8M3.2 544.6H4.8M3.2 548.7H4.8M0 552.7H5M3.2 556.7H4.8M3.2 560.8H4.8M3.2 564.8H4.8M3.2 568.9H4.8M0 572.9H4.6M3.2 577.0H4.8M3.2 581.0H4.8M3.2 585.0H4.8M3.2 589.1H4.8M0 593.1H5M3.2 597.2H4.8M3.2 601.2H4.8M3.2 605.3H4.8M3.2 609.3H4.8M0 613.3H4.6M3.2 617.4H4.8M3.2 621.4H4.8M3.2 625.5H4.8M3.2 629.5H4.8M0 633.6H5M3.2 637.6H4.8M3.2 641.6H4.8M3.2 645.7H4.8M3.2 649.7H4.8M0 653.8H4.6M3.2 657.8H4.8M3.2 661.9H4.8M3.2 665.9H4.8M3.2 669.9H4.8M0 674.0H5M3.2 678.0H4.8M3.2 682.1H4.8M3.2 686.1H4.8M3.2 690.2H4.8M0 694.2H4.6M3.2 698.2H4.8M3.2 702.3H4.8M3.2 706.3H4.8M3.2 710.4H4.8M0 714.4H5M3.2 718.5H4.8M3.2 722.5H4.8M3.2 726.5H4.8M3.2 730.6H4.8M0 734.6H4.6M3.2 738.7H4.8M3.2 742.7H4.8M3.2 746.8H4.8M3.2 750.8H4.8M0 754.9H5M3.2 758.9H4.8M3.2 762.9H4.8M3.2 767.0H4.8M3.2 771.0H4.8M0 775.1H4.6M3.2 779.1H4.8M3.2 783.2H4.8M3.2 787.2H4.8M3.2 791.2H4.8M0 795.3H5M3.2 799.3H4.8M3.2 803.4H4.8M3.2 807.4H4.8M3.2 811.5H4.8M0 815.5H4.6M3.2 819.5H4.8M3.2 823.6H4.8M3.2 827.6H4.8M3.2 831.7H4.8M0 835.7H5M3.2 839.8H4.8M3.2 843.8H4.8M3.2 847.8H4.8" stroke="#000" stroke-width="1.3" fill="none"/><g fill="none" stroke="#000" stroke-width="1"><rect x="1.4" y="149.3" width="3" height="3.8" rx="1.2"/><rect x="1.4" y="189.7" width="3" height="3.8" rx="1.2"/><rect x="1.4" y="230.2" width="3" height="3.8" rx="1.2"/><rect x="1.4" y="270.6" width="3" height="3.8" rx="1.2"/><rect x="1.4" y="311.0" width="3" height="3.8" rx="1.2"/><rect x="1.4" y="351.4" width="3" height="3.8" rx="1.2"/><rect x="1.4" y="391.9" width="3" height="3.8" rx="1.2"/><rect x="1.4" y="432.3" width="3" height="3.8" rx="1.2"/><rect x="1.4" y="472.7" width="3" height="3.8" rx="1.2"/><rect x="1.4" y="513.2" width="3" height="3.8" rx="1.2"/><rect x="1.4" y="553.6" width="3" height="3.8" rx="1.2"/><rect x="1.4" y="594.0" width="3" height="3.8" rx="1.2"/><rect x="1.4" y="634.5" width="3" height="3.8" rx="1.2"/><rect x="1.4" y="674.9" width="3" height="3.8" rx="1.2"/><rect x="1.4" y="715.3" width="3" height="3.8" rx="1.2"/><rect x="1.4" y="755.8" width="3" height="3.8" rx="1.2"/><rect x="1.4" y="796.2" width="3" height="3.8" rx="1.2"/><rect x="1.4" y="836.6" width="3" height="3.8" rx="1.2"/></g><g fill="none" stroke="#000" stroke-width="1.25"><use href="#strip" x="842.5" y="279.5"/><use href="#strip" x="842.5" y="321.5"/><use href="#strip" x="842.5" y="364.5"/><use href="#strip" x="842.5" y="406.5"/><use href="#strip" x="842.5" y="448.5"/><use href="#strip" x="842.5" y="491.5"/><use href="#strip" x="842.5" y="533.5"/><use href="#strip" x="842.5" y="576.5"/><use href="#strip" x="842.5" y="618.5"/></g><rect x="420" y="314" width="244.5" height="403" fill="#c0c0c0"/><rect x="417.5" y="310.5" width="243.5" height="403.5" fill="#fff" stroke="#000" stroke-width="1"/><g fill="none" stroke="#000" stroke-width="1.25"><use href="#strip" x="419.5" y="313.5"/><use href="#strip" x="419.5" y="355.5"/><use href="#strip" x="419.5" y="398.5"/><use href="#strip" x="419.5" y="440.5"/><use href="#strip" x="419.5" y="482.5"/><use href="#strip" x="419.5" y="525.5"/><use href="#strip" x="419.5" y="567.5"/><use href="#strip" x="419.5" y="610.5"/><use href="#strip" x="419.5" y="652.5"/></g><rect x="661.5" y="314" width="3" height="403" fill="#808080" opacity=".45"/><path d="M661 311V714" stroke="#000" stroke-width="1"/><clipPath id="tl"><rect x="9" y="114.5" width="116.8" height="66"/></clipPath><g clip-path="url(#tl)" fill="none" stroke="#000" stroke-width="1.4"><path transform="translate(0.5 115.5)" d="M-28 15 L-28 0 L-3 0 L-3 15 L0 15 M-28 8 L-21 8 L-21 10 L-28 10 M-26 4 L-5 4 L-5 18 L2 18 L2 13 L6 13 L6 19 L12 19 L12 21 L-9 21 L-9 6 L-16 6 L-16 10 L-19 10 L-19 6 L-26 6 Z M-14 8 L-10 8 L-10 24 L14 24 L14 15 L9 15 L9 13 L14 13 L14 8 M0 15 L0 0 L25 0 L25 15 L28 15 M0 8 L7 8 L7 10 L0 10 M2 4 L23 4 L23 18 L30 18 L30 13 L34 13 L34 19 L40 19 L40 21 L19 21 L19 6 L12 6 L12 10 L9 10 L9 6 L2 6 Z M14 8 L18 8 L18 24 L42 24 L42 15 L37 15 L37 13 L42 13 L42 8 M28 15 L28 0 L53 0 L53 15 L56 15 M28 8 L35 8 L35 10 L28 10 M30 4 L51 4 L51 18 L58 18 L58 13 L62 13 L62 19 L68 19 L68 21 L47 21 L47 6 L40 6 L40 10 L37 10 L37 6 L30 6 Z M42 8 L46 8 L46 24 L70 24 L70 15 L65 15 L65 13 L70 13 L70 8 M56 15 L56 0 L81 0 L81 15 L84 15 M56 8 L63 8 L63 10 L56 10 M58 4 L79 4 L79 18 L86 18 L86 13 L90 13 L90 19 L96 19 L96 21 L75 21 L75 6 L68 6 L68 10 L65 10 L65 6 L58 6 Z M70 8 L74 8 L74 24 L98 24 L98 15 L93 15 L93 13 L98 13 L98 8 M84 15 L84 0 L109 0 L109 15 L112 15 M84 8 L91 8 L91 10 L84 10 M86 4 L107 4 L107 18 L114 18 L114 13 L118 13 L118 19 L124 19 L124 21 L103 21 L103 6 L96 6 L96 10 L93 10 L93 6 L86 6 Z M98 8 L102 8 L102 24 L126 24 L126 15 L121 15 L121 13 L126 13 L126 8 M112 15 L112 0 L137 0 L137 15 L140 15 M112 8 L119 8 L119 10 L112 10 M114 4 L135 4 L135 18 L142 18 L142 13 L146 13 L146 19 L152 19 L152 21 L131 21 L131 6 L124 6 L124 10 L121 10 L121 6 L114 6 Z M126 8 L130 8 L130 24 L154 24 L154 15 L149 15 L149 13 L154 13 L154 8 M140 15 L140 0 L165 0 L165 15 L168 15 M140 8 L147 8 L147 10 L140 10 M142 4 L163 4 L163 18 L170 18 L170 13 L174 13 L174 19 L180 19 L180 21 L159 21 L159 6 L152 6 L152 10 L149 10 L149 6 L142 6 Z M154 8 L158 8 L158 24 L182 24 L182 15 L177 15 L177 13 L182 13 L182 8"/><path transform="translate(0.5 151.5)" d="M-28 15 L-28 0 L-3 0 L-3 15 L0 15 M-28 8 L-21 8 L-21 10 L-28 10 M-26 4 L-5 4 L-5 18 L2 18 L2 13 L6 13 L6 19 L12 19 L12 21 L-9 21 L-9 6 L-16 6 L-16 10 L-19 10 L-19 6 L-26 6 Z M-14 8 L-10 8 L-10 24 L14 24 L14 15 L9 15 L9 13 L14 13 L14 8 M0 15 L0 0 L25 0 L25 15 L28 15 M0 8 L7 8 L7 10 L0 10 M2 4 L23 4 L23 18 L30 18 L30 13 L34 13 L34 19 L40 19 L40 21 L19 21 L19 6 L12 6 L12 10 L9 10 L9 6 L2 6 Z M14 8 L18 8 L18 24 L42 24 L42 15 L37 15 L37 13 L42 13 L42 8 M28 15 L28 0 L53 0 L53 15 L56 15 M28 8 L35 8 L35 10 L28 10 M30 4 L51 4 L51 18 L58 18 L58 13 L62 13 L62 19 L68 19 L68 21 L47 21 L47 6 L40 6 L40 10 L37 10 L37 6 L30 6 Z M42 8 L46 8 L46 24 L70 24 L70 15 L65 15 L65 13 L70 13 L70 8 M56 15 L56 0 L81 0 L81 15 L84 15 M56 8 L63 8 L63 10 L56 10 M58 4 L79 4 L79 18 L86 18 L86 13 L90 13 L90 19 L96 19 L96 21 L75 21 L75 6 L68 6 L68 10 L65 10 L65 6 L58 6 Z M70 8 L74 8 L74 24 L98 24 L98 15 L93 15 L93 13 L98 13 L98 8 M84 15 L84 0 L109 0 L109 15 L112 15 M84 8 L91 8 L91 10 L84 10 M86 4 L107 4 L107 18 L114 18 L114 13 L118 13 L118 19 L124 19 L124 21 L103 21 L103 6 L96 6 L96 10 L93 10 L93 6 L86 6 Z M98 8 L102 8 L102 24 L126 24 L126 15 L121 15 L121 13 L126 13 L126 8 M112 15 L112 0 L137 0 L137 15 L140 15 M112 8 L119 8 L119 10 L112 10 M114 4 L135 4 L135 18 L142 18 L142 13 L146 13 L146 19 L152 19 L152 21 L131 21 L131 6 L124 6 L124 10 L121 10 L121 6 L114 6 Z M126 8 L130 8 L130 24 L154 24 L154 15 L149 15 L149 13 L154 13 L154 8 M140 15 L140 0 L165 0 L165 15 L168 15 M140 8 L147 8 L147 10 L140 10 M142 4 L163 4 L163 18 L170 18 L170 13 L174 13 L174 19 L180 19 L180 21 L159 21 L159 6 L152 6 L152 10 L149 10 L149 6 L142 6 Z M154 8 L158 8 L158 24 L182 24 L182 15 L177 15 L177 13 L182 13 L182 8"/><path d="M9 115.5H126" stroke-width="1.8"/><path d="M9 143.5H126M9 147.5H126M9 178.5H126"/></g></svg>
<div class="a" id="dlg" style="left:0;top:0;width:1186px;height:849px;opacity:.999">
<div class="a" style="left:107px;top:230px;width:498px;height:397px;border-radius:7px;border:1px solid #3c4550;box-shadow:0 0 0 1px rgba(255,255,255,.0),2px 4px 14px 2px rgba(0,0,0,.55),0 0 4px rgba(0,0,0,.5);background:linear-gradient(90deg,#dce9f9 0%,#cfe1f7 35%,#b5d1f3 100%)"><div class="a" style="left:0;top:0;right:0;bottom:0;border-radius:6px;border:1px solid rgba(255,255,255,.75)"></div><div class="a" style="right:1px;top:80px;width:7px;bottom:1px;background:linear-gradient(#b4cbe6,#86a4c8 12%,#86a4c8);border-radius:0 0 5px 0"></div><div class="a" style="left:300px;right:1px;bottom:1px;height:6px;background:linear-gradient(90deg,rgba(134,164,200,0),#8aa9cd 30%,#86a4c8);border-radius:0 0 5px 0"></div></div>
<div class="a" style="left:115px;top:239px;line-height:13px;font-size:12px;white-space:nowrap;text-shadow:0 0 5px #fff,0 0 5px #fff,0 0 8px #fff">刻绘输出</div>
<div class="a" style="left:551px;top:231px;width:47px;height:19px;border:1px solid #4b2a2a;border-top:0;border-radius:0 0 5px 5px;background:linear-gradient(#e9a99b 0%,#d9776a 45%,#c1392b 50%,#c64a37 85%,#d98065 100%);box-shadow:inset 0 0 0 1px rgba(255,255,255,.35)"><svg class="a" style="left:15px;top:3px" width="16" height="12" viewBox="0 0 16 12"><path d="M3.5 2 L12.5 10 M12.5 2 L3.5 10" stroke="#3a3a3a" stroke-width="4" stroke-linecap="butt"/><path d="M3.5 2 L12.5 10 M12.5 2 L3.5 10" stroke="#fff" stroke-width="2.4" stroke-linecap="butt"/></svg></div>
<div class="a" style="left:114px;top:259px;width:484px;height:360px;background:#f0f0f0;border:1px solid #6d7c8e;box-shadow:0 0 0 1px rgba(255,255,255,.7)"></div>
<div class="gb" style="left:126px;top:271px;width:448px;height:24px;border-left-color:transparent;box-shadow:inset 0 1px 0 #fff,0 1px 0 #fff"></div>
<div class="bt" style="left:126px;top:272px;width:66px;height:23px;line-height:23px;">刻绘设备</div>
<div class="cbx" style="left:196px;top:274px;width:187px;height:19px"><div class="dd"></div><span class="a" style="left:4px;top:0;line-height:20px;font-family:'Liberation Mono','WenQuanYi Zen Hei',monospace"><span style="font-size:11px;letter-spacing:-0.6px">PCUT CTN1200 </span>皮卡刻字机</span></div>
<div class="lb" style="left:384px;top:275px;">连接在</div>
<div class="cbx" style="left:423px;top:274px;width:65px;height:19px"><div class="dd"></div><span class="a" style="left:4px;top:0;line-height:20px;font-family:'Liberation Mono','WenQuanYi Zen Hei',monospace">串口<span style="font-size:11px">2</span></span></div>
<div class="bt" style="left:499px;top:273px;width:70px;height:22px;line-height:22px;">设置<span style="letter-spacing:2px">...</span></div>
<svg class="a" style="left:126px;top:307px" width="450" height="117" viewBox="0 0 450 117"><rect x="0.5" y="0.5" width="449" height="116" fill="#fff" stroke="#000090" stroke-width="1"/><rect x="1" y="1" width="199" height="115" fill="#fff"/><clipPath id="pvc"><rect x="1" y="1" width="199" height="115"/><rect x="200" y="1" width="201.5" height="7.5"/></clipPath><g clip-path="url(#pvc)"><g transform="translate(1.5 -28.1) scale(0.523) matrix(0 1 1 0 0 0)" fill="none" stroke="#000" stroke-width="1.95" shape-rendering="crispEdges"><use href="#strip" x="0" y="0.0"/><use href="#strip" x="0" y="42.3"/><use href="#strip" x="0" y="84.6"/><use href="#strip" x="0" y="126.9"/><use href="#strip" x="0" y="169.2"/><use href="#strip" x="0" y="211.5"/><use href="#strip" x="0" y="253.8"/><use href="#strip" x="0" y="296.1"/><use href="#strip" x="0" y="338.4"/><use href="#strip" x="0" y="384.2"/><use href="#strip" x="0" y="426.5"/><use href="#strip" x="0" y="468.8"/><use href="#strip" x="0" y="511.1"/><use href="#strip" x="0" y="553.4"/><use href="#strip" x="0" y="595.7"/><use href="#strip" x="0" y="638.0"/><use href="#strip" x="0" y="680.3"/><use href="#strip" x="0" y="722.6"/></g></g><path d="M201 8.6H401.5" stroke="#900000" stroke-width="1.2" stroke-dasharray="5 1.5"/><path d="M200 1V116" stroke="#8b0000" stroke-width="1.6"/><path d="M1 115.3H200" stroke="#7a0010" stroke-width="1.4"/><rect x="4.5" y="103.5" width="8" height="8" fill="none" stroke="#000090" stroke-width="1.3"/><path d="M97 60 V70 M95 63 H99 M95 67 H99" stroke="#a01010" stroke-width="1"/></svg>
<div class="a" style="left:126px;top:424px;width:450px;height:13px;background:#f6f6f6"></div>
<div class="bt" style="left:126px;top:424px;width:15px;height:13px"><div class="a" style="left:4px;top:3px;border:3px solid transparent;border-right:4px solid #000;border-left:0"></div></div>
<div class="bt" style="left:141px;top:424px;width:17px;height:13px"></div>
<div class="bt" style="left:558px;top:424px;width:17px;height:13px"><div class="a" style="left:6px;top:3px;border:3px solid transparent;border-left:4px solid #000;border-right:0"></div></div>
<div class="gb" style="left:126px;top:449px;width:100px;height:72px"></div>
<div class="gl" style="left:134px;top:443px">材质大小</div>
<div class="cbx" style="left:136px;top:455px;width:80px;height:18px"><div class="dd"></div><span class="a" style="left:5px;top:0;line-height:19px"><span class="mn">[</span>用户定义<span class="mn">]</span></span></div>
<div class="lb" style="left:128px;top:481px;">材质宽:</div>
<div class="ed" style="left:177px;top:476px;width:40px;height:16px;"><span class="a num" style="left:3px;top:1px;line-height:16px">550</span></div>
<div class="lb" style="left:128px;top:501px;">材质长:</div>
<div class="ed" style="left:177px;top:499px;width:40px;height:17px;"><span class="a num" style="left:3px;top:1px;line-height:17px">15000</span></div>
<div class="gb" style="left:229px;top:449px;width:71px;height:53px"></div>
<div class="gl" style="left:236px;top:443px">实际大小</div>
<div class="lb" style="left:238px;top:465px;"><span style="display:inline-block;width:6px;height:12px;overflow:hidden;vertical-align:top"><span style="display:inline-block;margin-left:-6px">宽</span></span>:</div>
<div class="ed" style="left:253px;top:460px;width:40px;height:17px;background:#f0f0f0"><span class="a num" style="left:3px;top:3px;line-height:12px;background:#3399ff;color:#fff;padding:0 0px">600</span></div>
<div class="lb" style="left:238px;top:485px;"><span style="display:inline-block;width:6px;height:12px;overflow:hidden;vertical-align:top"><span style="display:inline-block;margin-left:-6px">高</span></span>:</div>
<div class="ed" style="left:253px;top:480px;width:40px;height:16px;background:#f0f0f0"><span class="a num" style="left:3px;top:1px;line-height:16px">1000</span></div>
<div class="gb" style="left:307px;top:449px;width:71px;height:53px"></div>
<div class="gl" style="left:314px;top:443px">起始位置</div>
<div class="lb" style="left:312px;top:464px;">水</div>
<div class="ed" style="left:337px;top:460px;width:34px;height:17px;"><span class="a num" style="left:3px;top:1px;line-height:17px">0</span></div>
<div class="lb" style="left:312px;top:485px;">竖</div>
<div class="ed" style="left:337px;top:481px;width:34px;height:17px;"><span class="a num" style="left:3px;top:1px;line-height:17px">0</span></div>
<div class="cb" style="left:387px;top:444px"><svg class="a" style="left:2px;top:2px" width="7" height="7" viewBox="0 0 7 7"><path d="M0.5 2.5 L2.5 4.8 L6.5 0.6" stroke="#000" stroke-width="1.6" fill="none"/></svg></div>
<div class="lb" style="left:405px;top:444px;">顺序输出</div>
<div class="cb" style="left:387px;top:465px"></div>
<div class="lb" style="left:405px;top:465px;">半切输出</div>
<div class="cb" style="left:387px;top:487px"></div>
<div class="lb" style="left:405px;top:487px;">填充输出</div>
<div class="cbx" style="left:387px;top:503px;width:100px;height:19px"><div class="dd"></div><span class="a" style="left:4px;top:1px;line-height:20px">省纸方式</span></div>
<div class="bt" style="left:465px;top:446px;width:45px;height:23px;line-height:23px;">测试</div>
<div class="bt" style="left:511px;top:446px;width:66px;height:23px;line-height:23px;">刻绘输出</div>
<div class="bt" style="left:511px;top:475px;width:66px;height:23px;line-height:23px;">结束</div>
<div class="bt" style="left:511px;top:503px;width:66px;height:22px;line-height:21px;box-shadow:inset 1px 1px 0 #696969,inset -1px -1px 0 #fff,inset 2px 2px 0 #a0a0a0,inset -2px -2px 0 #e3e3e3;background:#f4f4f4">自动复制</div>
<div class="a" style="left:228px;top:504px;width:26px;height:22px;box-shadow:inset -1px -1px 0 #000,inset 1px 1px 0 #fff"><div class="a" style="left:5px;top:2px;width:16px;height:15px;background:#c0c0c0"><svg class="a" style="left:-1px;top:-1px" width="17" height="16" viewBox="0 0 17 16"><path d="M4 14 V3 H13 M4 8 H11" stroke="#000" stroke-width="2.2" fill="none"/></svg></div></div>
<div class="a" style="left:258px;top:504px;width:26px;height:22px;box-shadow:inset -1px -1px 0 #000,inset 1px 1px 0 #fff"><div class="a" style="left:5px;top:2px;width:16px;height:15px;background:#c0c0c0"><svg class="a" style="left:-1px;top:-1px" width="17" height="16" viewBox="0 0 17 16"><rect x="7.5" y="2.4" width="3.2" height="3.2" fill="#fff" stroke="#000" stroke-width="1.1"/><path d="M4.6 12.2 V7.2 Q4.6 6.2 5.6 6.2 H12.6 Q13.6 6.2 13.6 7.2 V12.2 M7.2 8.2 V15.4 M11.2 8.2 V15.4" stroke="#000" stroke-width="1.2" fill="none"/></svg></div></div>
<div class="a" style="left:288px;top:504px;width:26px;height:22px;box-shadow:inset -1px -1px 0 #000,inset 1px 1px 0 #fff"><div class="a" style="left:5px;top:2px;width:16px;height:15px;background:#c0c0c0"><svg class="a" style="left:-1px;top:-1px" width="17" height="16" viewBox="0 0 17 16"><path d="M2.5 4 H14.5 M2.5 8 H14.5 M2.5 12 H14.5" stroke="#000" stroke-width="2.2"/></svg></div></div>
<div class="a" style="left:318px;top:504px;width:26px;height:22px;box-shadow:inset -1px -1px 0 #000,inset 1px 1px 0 #fff"><div class="a" style="left:5px;top:2px;width:16px;height:15px;background:#c0c0c0"><svg class="a" style="left:-1px;top:-1px" width="17" height="16" viewBox="0 0 17 16"><text x="9" y="13" font-size="12" text-anchor="middle" font-family="WenQuanYi Zen Hei,Noto Sans CJK SC,sans-serif" font-weight="bold" fill="#000">字</text></svg></div></div>
<div class="a" style="left:348px;top:504px;width:26px;height:22px;box-shadow:inset -1px -1px 0 #000,inset 1px 1px 0 #fff"><div class="a" style="left:5px;top:2px;width:16px;height:15px;background:#c0c0c0"><svg class="a" style="left:-1px;top:-1px" width="17" height="16" viewBox="0 0 17 16"><circle cx="7" cy="5" r="2.3" fill="none" stroke="#20c040" stroke-width="1.2"/><path d="M2 11 H15" stroke="#20d0e0" stroke-width="1.6"/><path d="M7 8 V11" stroke="#20d0e0" stroke-width="1"/></svg></div></div>
<div class="gb" style="left:126px;top:530px;width:100px;height:81px"></div>
<div class="gl" style="left:134px;top:524px">输出区域:</div>
<div class="lb" style="left:141px;top:544px;">页</div>
<div class="ed" style="left:159px;top:541px;width:44px;height:17px;"><span class="a num" style="left:3px;top:1px;line-height:17px">1</span></div>
<div class="sp u" style="left:204px;top:541px;width:17px;height:8px"></div>
<div class="sp d" style="left:204px;top:549px;width:17px;height:9px"></div>
<div class="lb" style="left:141px;top:569px;">区</div>
<div class="cbx" style="left:159px;top:563px;width:64px;height:19px"><div class="dd"></div><span class="a num" style="left:4px;top:0;line-height:19px">1</span></div>
<div class="lb" style="left:141px;top:587px;">接</div>
<div class="cbx" style="left:159px;top:583px;width:64px;height:19px"><div class="dd"></div><span class="a" style="left:3px;top:0;line-height:20px"><span class="num">0</span>毫米</span></div>
<div class="a" style="left:234px;top:533px;width:60px;height:75px;background:linear-gradient(90deg,#fff 58px,#f6f6f6 58px)"></div>
<div class="a" style="left:242px;top:533px;width:50px;height:72px;background:#000"></div>
<div class="a" style="left:242px;top:605px;width:45px;height:3px;background:#000"></div>
<div class="a" style="left:243px;top:605px;width:43px;height:2px;background:#fff"></div>
<div class="a" style="left:290px;top:567px;width:1px;height:1px;background:#fff"></div>
<div class="a" style="left:290px;top:576px;width:1px;height:1px;background:#fff"></div>
<div class="a" style="left:290px;top:584px;width:1px;height:1px;background:#fff"></div>
<div class="a" style="left:290px;top:592px;width:1px;height:1px;background:#fff"></div>
<div class="bt" style="left:303px;top:541px;width:59px;height:20px;line-height:20px;">版面预览</div>
<div class="gb" style="left:370px;top:535px;width:106px;height:32px"></div>
<div class="gl" style="left:378px;top:529px">输出比例</div>
<div class="cbx" style="left:387px;top:543px;width:85px;height:18px"><div class="dd"></div><span class="a" style="left:4px;top:1px;line-height:18px;font-family:'Liberation Mono','WenQuanYi Zen Hei',monospace;font-size:11px;letter-spacing:-0.6px">100%</span></div>
<div class="gb" style="left:303px;top:578px;width:175px;height:29px"></div>
<div class="gl" style="left:311px;top:572px">输出颜色</div>
<div class="cb" style="left:312px;top:586px"><svg class="a" style="left:2px;top:2px" width="7" height="7" viewBox="0 0 7 7"><path d="M0.5 2.5 L2.5 4.8 L6.5 0.6" stroke="#000" stroke-width="1.6" fill="none"/></svg></div>
<div class="lb" style="left:330px;top:586px;">全部输出</div>
<div class="cbx" style="left:387px;top:580px;width:85px;height:22px"><div class="dd dis" style="width:16px"></div><div class="a" style="left:3px;top:4px;width:32px;height:15px;background:#000"></div><span class="a" style="left:40px;top:0;line-height:21px">黑</span><div class="a" style="left:65px;top:3px;width:1px;height:17px;background:#000"></div><div class="a" style="left:3px;top:19px;width:63px;height:1px;background:#000"></div></div>
<div class="lb" style="left:508px;top:535px;">份数</div>
<div class="ed" style="left:540px;top:530px;width:29px;height:17px;"><span class="a num" style="left:3px;top:1px;line-height:17px">1</span></div>
<div class="sp u" style="left:570px;top:530px;width:17px;height:9px"></div>
<div class="sp d" style="left:570px;top:539px;width:17px;height:10px"></div>
<div class="lb" style="left:484px;top:559px;">水平间隔</div>
<div class="ed" style="left:540px;top:556px;width:29px;height:17px;"><span class="a num" style="left:3px;top:1px;line-height:17px">0</span></div>
<div class="sp u" style="left:570px;top:556px;width:17px;height:9px"></div>
<div class="sp d" style="left:570px;top:565px;width:17px;height:9px"></div>
<div class="lb" style="left:484px;top:581px;">竖直间隔</div>
<div class="ed" style="left:540px;top:578px;width:29px;height:17px;"><span class="a num" style="left:3px;top:1px;line-height:17px">0</span></div>
<div class="sp u" style="left:570px;top:578px;width:17px;height:9px"></div>
<div class="sp d" style="left:570px;top:587px;width:17px;height:9px"></div>
</div>
</body></html>
